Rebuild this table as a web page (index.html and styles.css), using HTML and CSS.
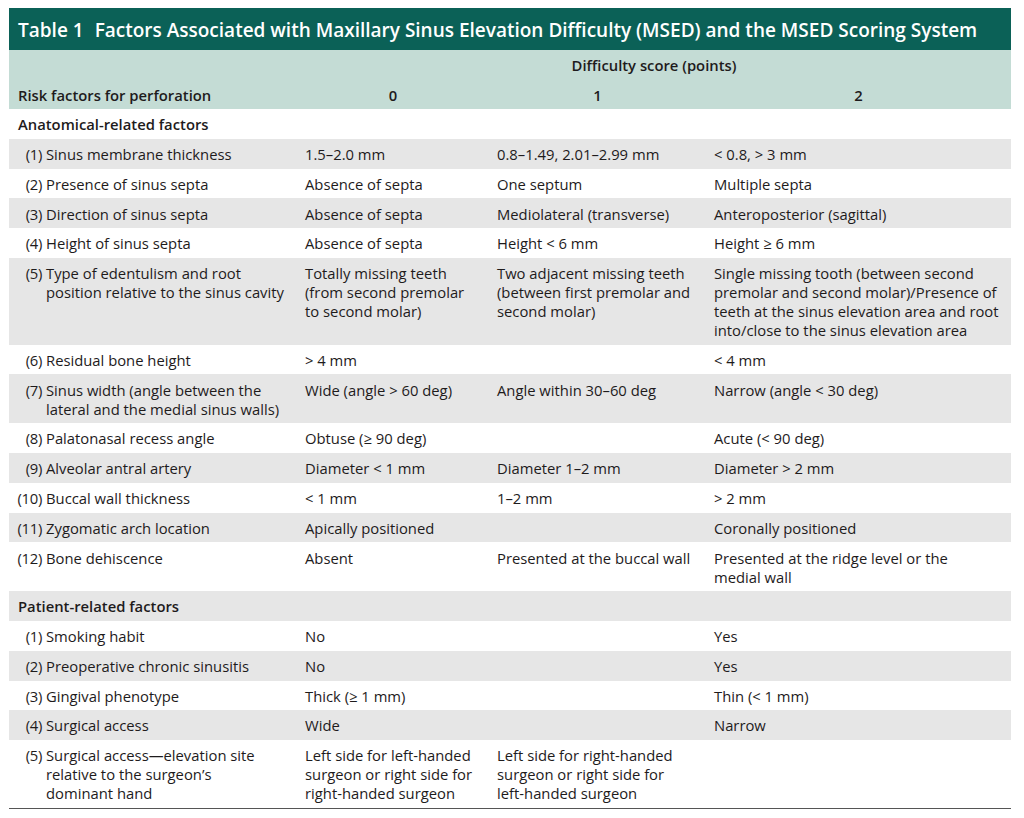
FILE: index.html
```html
<!DOCTYPE html>
<html lang="en">
<head>
<meta charset="utf-8">
<title>Table 1</title>
<link rel="stylesheet" href="styles.css">
</head>
<body>
<div class="wrap">
  <div class="title"><span class="tnum">Table 1</span>Factors Associated with Maxillary Sinus Elevation Difficulty (MSED) and the MSED Scoring System</div>
  <table class="tbl">
    <colgroup>
      <col class="c0"><col class="c1"><col class="c2"><col class="c3">
    </colgroup>
    <thead>
      <tr class="h1"><th></th><th colspan="3" class="center">Difficulty score (points)</th></tr>
      <tr class="h2"><th class="left">Risk factors for perforation</th><th class="center">0</th><th class="center">1</th><th class="center">2</th></tr>
    </thead>
    <tbody>
      <tr class="sec"><td colspan="4">Anatomical-related factors</td></tr>
      <tr class="g"><td><div class="item"><span class="num">(1)</span><span class="txt">Sinus membrane thickness</span></div></td><td>1.5–2.0 mm</td><td>0.8–1.49, 2.01–2.99 mm</td><td>&lt; 0.8, &gt; 3 mm</td></tr>
      <tr><td><div class="item"><span class="num">(2)</span><span class="txt">Presence of sinus septa</span></div></td><td>Absence of septa</td><td>One septum</td><td>Multiple septa</td></tr>
      <tr class="g"><td><div class="item"><span class="num">(3)</span><span class="txt">Direction of sinus septa</span></div></td><td>Absence of septa</td><td>Mediolateral (transverse)</td><td>Anteroposterior (sagittal)</td></tr>
      <tr><td><div class="item"><span class="num">(4)</span><span class="txt">Height of sinus septa</span></div></td><td>Absence of septa</td><td>Height &lt; 6 mm</td><td>Height ≥ 6 mm</td></tr>
      <tr class="g"><td><div class="item"><span class="num">(5)</span><span class="txt">Type of edentulism and root<br>position relative to the sinus cavity</span></div></td><td>Totally missing teeth<br>(from second premolar<br>to second molar)</td><td>Two adjacent missing teeth<br>(between first premolar and<br>second molar)</td><td>Single missing tooth (between second<br>premolar and second molar)/Presence of<br>teeth at the sinus elevation area and root<br>into/close to the sinus elevation area</td></tr>
      <tr><td><div class="item"><span class="num">(6)</span><span class="txt">Residual bone height</span></div></td><td>&gt; 4 mm</td><td></td><td>&lt; 4 mm</td></tr>
      <tr class="g"><td><div class="item"><span class="num">(7)</span><span class="txt">Sinus width (angle between the<br>lateral and the medial sinus walls)</span></div></td><td>Wide (angle &gt; 60 deg)</td><td>Angle within 30–60 deg</td><td>Narrow (angle &lt; 30 deg)</td></tr>
      <tr><td><div class="item"><span class="num">(8)</span><span class="txt">Palatonasal recess angle</span></div></td><td>Obtuse (≥ 90 deg)</td><td></td><td>Acute (&lt; 90 deg)</td></tr>
      <tr class="g"><td><div class="item"><span class="num">(9)</span><span class="txt">Alveolar antral artery</span></div></td><td>Diameter &lt; 1 mm</td><td>Diameter 1–2 mm</td><td>Diameter &gt; 2 mm</td></tr>
      <tr><td><div class="item"><span class="num">(10)</span><span class="txt">Buccal wall thickness</span></div></td><td>&lt; 1 mm</td><td>1–2 mm</td><td>&gt; 2 mm</td></tr>
      <tr class="g"><td><div class="item"><span class="num">(11)</span><span class="txt">Zygomatic arch location</span></div></td><td>Apically positioned</td><td></td><td>Coronally positioned</td></tr>
      <tr><td><div class="item"><span class="num">(12)</span><span class="txt">Bone dehiscence</span></div></td><td>Absent</td><td>Presented at the buccal wall</td><td>Presented at the ridge level or the<br>medial wall</td></tr>
      <tr class="g sec"><td colspan="4">Patient-related factors</td></tr>
      <tr><td><div class="item"><span class="num">(1)</span><span class="txt">Smoking habit</span></div></td><td>No</td><td></td><td>Yes</td></tr>
      <tr class="g"><td><div class="item"><span class="num">(2)</span><span class="txt">Preoperative chronic sinusitis</span></div></td><td>No</td><td></td><td>Yes</td></tr>
      <tr><td><div class="item"><span class="num">(3)</span><span class="txt">Gingival phenotype</span></div></td><td>Thick (≥ 1 mm)</td><td></td><td>Thin (&lt; 1 mm)</td></tr>
      <tr class="g"><td><div class="item"><span class="num">(4)</span><span class="txt">Surgical access</span></div></td><td>Wide</td><td></td><td>Narrow</td></tr>
      <tr class="last"><td><div class="item"><span class="num">(5)</span><span class="txt">Surgical access—elevation site<br>relative to the surgeon’s<br>dominant hand</span></div></td><td>Left side for left-handed<br>surgeon or right side for<br>right-handed surgeon</td><td>Left side for right-handed<br>surgeon or right side for<br>left-handed surgeon</td><td></td></tr>
    </tbody>
  </table>
</div>
</body>
</html>
```
FILE: styles.css
```css
html, body {
  margin: 0;
  padding: 0;
  background: #ffffff;
}
body {
  font-family: "Open Sans", "Noto Sans", sans-serif;
  color: #1e1b1c;
}
.wrap {
  width: 1002px;
  margin: 8px 0 0 9px;
}
.title {
  background: #0b6157;
  color: #ffffff;
  height: 42px;
  box-sizing: border-box;
  padding: 1px 9px 0 9px;
  display: flex;
  align-items: center;
  font-size: 19px;
  font-weight: 600;
  white-space: nowrap;
}
.tnum {
  margin-right: 11px;
}
.tbl {
  width: 1002px;
  border-collapse: collapse;
  table-layout: fixed;
  font-size: 14.8px;
  line-height: 19px;
}
.c0 { width: 288px; }
.c1 { width: 192px; }
.c2 { width: 217px; }
.c3 { width: 305px; }
thead tr {
  background: #c4dcd5;
}
th {
  font-weight: 600;
  height: 29.5px;
  padding: 2px 8px 0 8px;
  box-sizing: border-box;
  vertical-align: middle;
  white-space: nowrap;
}
th.left {
  text-align: left;
  padding-left: 9px;
}
th.center {
  text-align: center;
}
td {
  padding: 6.2px 8px 4.6px 8px;
  vertical-align: top;
  text-align: left;
  white-space: nowrap;
}
td:first-child {
  padding-left: 9px;
}
tbody tr:not(.sec) td:first-child {
  padding-left: 7px;
}
tr.g {
  background: #e6e6e6;
}
tr.sec td {
  font-weight: 600;
}
tr.last {
  border-bottom: 1px solid #555555;
}
.item {
  display: flex;
}
.num {
  width: 26px;
  flex: none;
  text-align: right;
  margin-right: 4px;
  letter-spacing: -0.3px;
}
.txt {
  flex: 1;
}
```
